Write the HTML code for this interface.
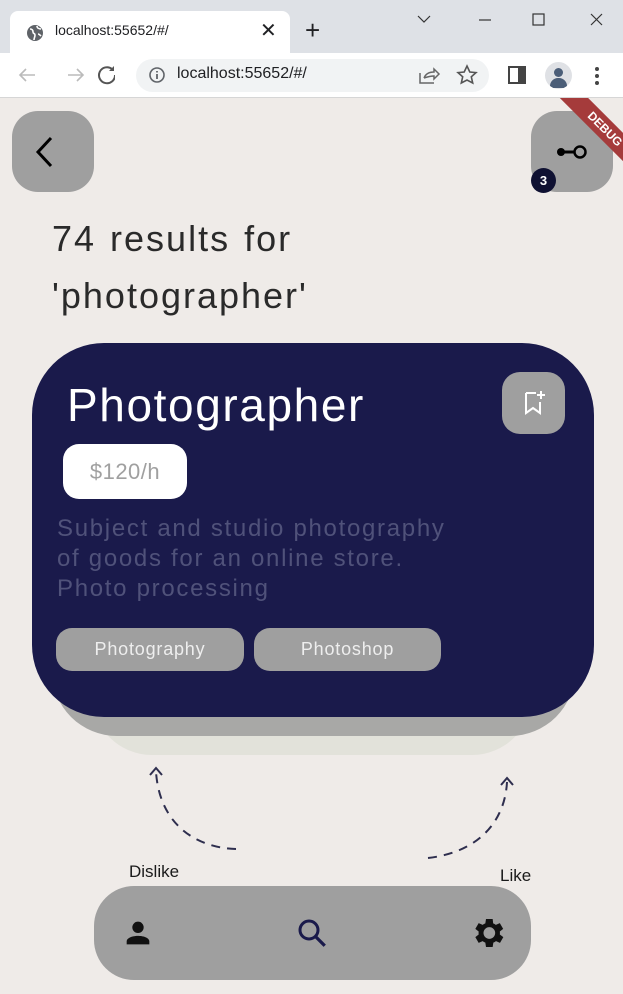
<!DOCTYPE html>
<html><head><meta charset="utf-8"><style>
*{margin:0;padding:0;box-sizing:border-box}
body{width:623px;height:994px;overflow:hidden;background:#efebe8;font-family:"Liberation Sans",sans-serif;position:relative}
.abs{position:absolute}
</style></head><body>
<div class="abs" style="left:0;top:0;width:623px;height:53px;background:#dee1e6"></div>
<div class="abs" style="left:10px;top:11px;width:280px;height:42px;background:#fff;border-radius:8px 8px 0 0"></div>
<svg class="abs" style="left:25px;top:23px" width="20" height="20" viewBox="0 0 20 20"><circle cx="10" cy="10" r="8" fill="#5f6368"/><path d="M5 6c2 0 3 1 3 3s2 1 2 3-1 3-1 5M12 3c0 2 2 3 4 3M13 11c1 0 2 1 3 2" stroke="#fff" stroke-width="1.6" fill="none"/></svg>
<div class="abs" style="left:55px;top:22px;font-size:14px;color:#202124">localhost:55652/#/</div>
<div class="abs" style="left:260px;top:18px;font-size:20px;color:#202124">✕</div>
<div class="abs" style="left:305px;top:15px;font-size:26px;color:#202124">+</div>
<svg class="abs" style="left:415px;top:12px" width="200" height="16" viewBox="0 0 200 16"><path d="M3 4l6 6 6-6" stroke="#333" fill="none" stroke-width="1.2"/><path d="M64 8h12" stroke="#333" stroke-width="1.2"/><rect x="118" y="2" width="11" height="11" stroke="#333" fill="none" stroke-width="1.2"/><path d="M176 2l11 11M187 2l-11 11" stroke="#333" stroke-width="1.2"/></svg>
<div class="abs" style="left:0;top:53px;width:623px;height:45px;background:#fff;border-bottom:1px solid #d6d6d6"></div>
<svg class="abs" style="left:15px;top:63px" width="100" height="24" viewBox="0 0 100 24"><path d="M20 12H5M11 6l-6 6 6 6" stroke="#bbb" stroke-width="1.6" fill="none"/><path d="M53 12h15M62 6l6 6-6 6" stroke="#bbb" stroke-width="1.6" fill="none"/><path d="M100 12a8 8 0 1 1-3-6" stroke="#555" stroke-width="2" fill="none"/><path d="M99 3v5h-5" fill="#555"/></svg>
<div class="abs" style="left:136px;top:59px;width:353px;height:33px;background:#f1f3f4;border-radius:17px"></div>
<svg class="abs" style="left:148px;top:66px" width="18" height="18" viewBox="0 0 18 18"><circle cx="9" cy="9" r="7" stroke="#5f6368" stroke-width="1.6" fill="none"/><path d="M9 8v5M9 5v1.5" stroke="#5f6368" stroke-width="1.8"/></svg>
<div class="abs" style="left:177px;top:65px;font-size:16px;color:#202124">localhost:55652/#/</div>
<svg class="abs" style="left:417px;top:64px" width="62" height="22" viewBox="0 0 62 22"><path d="M3 9v10h14M7 14c2-5 6-6 10-6V5l5 5-5 5v-3c-4 0-7 1-10 2" stroke="#666" fill="none" stroke-width="1.5"/><path d="M50 2l2.8 6 6.2.6-4.7 4.2 1.4 6.2L50 16l-5.7 3 1.4-6.2L41 8.6l6.2-.6z" stroke="#555" fill="none" stroke-width="1.6"/></svg>
<svg class="abs" style="left:508px;top:66px" width="18" height="18"><rect x="1" y="1" width="16" height="16" fill="none" stroke="#444" stroke-width="2"/><rect x="10" y="1" width="7" height="16" fill="#444"/></svg>
<div class="abs" style="left:545px;top:62px;width:27px;height:27px;border-radius:50%;background:#dfe1e5;overflow:hidden"><div class="abs" style="left:9px;top:6px;width:9px;height:9px;border-radius:50%;background:#4b5e78"></div><div class="abs" style="left:5px;top:16px;width:17px;height:10px;border-radius:8px 8px 0 0;background:#4b5e78"></div></div>
<svg class="abs" style="left:594px;top:66px" width="6" height="20"><circle cx="3" cy="3" r="2" fill="#444"/><circle cx="3" cy="10" r="2" fill="#444"/><circle cx="3" cy="17" r="2" fill="#444"/></svg>

<div class="abs" style="left:12px;top:111px;width:82px;height:81px;border-radius:26px;background:#9f9f9f"></div>
<svg class="abs" style="left:30px;top:135px" width="30" height="34"><path d="M21 3L8 17l13 14" stroke="#000" stroke-width="3" fill="none"/></svg>
<div class="abs" style="left:531px;top:111px;width:82px;height:81px;border-radius:26px;background:#9f9f9f"></div>
<svg class="abs" style="left:555px;top:142px" width="34" height="20"><circle cx="6" cy="10" r="4" fill="#000"/><path d="M6 10h14" stroke="#000" stroke-width="3"/><circle cx="25" cy="10" r="5.5" stroke="#000" stroke-width="2.5" fill="none"/></svg>
<div class="abs" style="left:531px;top:168px;width:25px;height:25px;border-radius:50%;background:#0f1132;color:#fff;font-size:13px;font-weight:bold;text-align:center;line-height:25px">3</div>
<div class="abs" style="overflow:hidden;left:520px;top:98px;width:103px;height:110px">
<div class="abs" style="left:15px;top:21px;width:140px;height:20px;background:#a53b3b;color:#fff;font-size:12px;font-weight:bold;text-align:center;line-height:20px;transform:rotate(45deg);transform-origin:center">DEBUG</div></div>

<div class="abs" style="left:52px;top:210px;font-size:36px;line-height:57px;color:#2a2a2a;letter-spacing:2px;word-spacing:2px;">74 results for<br>'photographer'</div>

<div class="abs" style="left:92px;top:560px;width:440px;height:195px;border-radius:0 0 60px 60px;background:#e2e2da"></div>
<div class="abs" style="left:52px;top:500px;width:523px;height:236px;border-radius:0 0 65px 65px;background:#a8a8a6"></div>
<div class="abs" style="left:32px;top:343px;width:562px;height:374px;border-radius:72px;background:#1a1a4b"></div>
<div class="abs" style="left:67px;top:378px;font-size:46px;color:#fff;letter-spacing:1.6px">Photographer</div>
<div class="abs" style="left:502px;top:372px;width:63px;height:62px;border-radius:18px;background:#9f9f9f"></div>
<svg class="abs" style="left:522px;top:390px" width="24" height="26"><path d="M4 3h10M4 3v20l7-5 7 5V12" stroke="#fff" stroke-width="2" fill="none"/><path d="M19 1v8M15 5h8" stroke="#fff" stroke-width="2"/></svg>
<div class="abs" style="left:63px;top:444px;width:124px;height:55px;border-radius:16px;background:#fff;color:#a0a0a0;font-size:22px;text-align:center;line-height:55px;letter-spacing:0.5px">$120/h</div>
<div class="abs" style="left:57px;top:514px;font-size:24px;line-height:30px;color:#50527a;letter-spacing:1.7px">Subject and studio photography<br>of goods for an online store.<br>Photo processing</div>
<div class="abs" style="left:56px;top:628px;width:188px;height:43px;border-radius:16px;background:#9f9f9f;color:#eee;font-size:18px;text-align:center;line-height:43px;letter-spacing:0.8px">Photography</div>
<div class="abs" style="left:254px;top:628px;width:187px;height:43px;border-radius:16px;background:#9f9f9f;color:#eee;font-size:18px;text-align:center;line-height:43px;letter-spacing:0.8px">Photoshop</div>

<svg class="abs" style="left:140px;top:760px" width="390" height="110"><path d="M96 89C60 88 20 68 16 12" stroke="#2e2e4e" stroke-width="2" fill="none" stroke-dasharray="9 7"/><path d="M10 15l6-7 6 7" stroke="#2e2e4e" stroke-width="2" fill="none"/><path d="M288 98C340 92 365 60 367 22" stroke="#2e2e4e" stroke-width="2" fill="none" stroke-dasharray="9 7"/><path d="M361 25l6-7 6 7" stroke="#2e2e4e" stroke-width="2" fill="none"/></svg>
<div class="abs" style="left:129px;top:862px;font-size:17px;color:#1a1a1a">Dislike</div>
<div class="abs" style="left:500px;top:866px;font-size:17px;color:#1a1a1a">Like</div>

<div class="abs" style="left:94px;top:886px;width:437px;height:94px;border-radius:40px;background:#9f9f9f"></div>
<svg class="abs" style="left:121px;top:916px" width="34" height="34" viewBox="0 0 24 24"><circle cx="12" cy="8" r="4" fill="#111"/><path d="M4 20v-2c0-3 5-4 8-4s8 1 8 4v2z" fill="#111"/></svg>
<svg class="abs" style="left:294px;top:915px" width="36" height="36" viewBox="0 0 24 24"><circle cx="10" cy="10" r="6" stroke="#1a1a4b" stroke-width="2" fill="none"/><path d="M14.5 14.5l6 6" stroke="#1a1a4b" stroke-width="2.2"/></svg>
<svg class="abs" style="left:468px;top:913px" width="40" height="40" viewBox="0 0 24 24"><path fill="#111" d="M19.1 12.9a7 7 0 000-1.8l2-1.6-2-3.4-2.4 1a7 7 0 00-1.6-.9L14.8 3.6h-4l-.4 2.6a7 7 0 00-1.6.9l-2.4-1-2 3.4 2 1.6a7 7 0 000 1.8l-2 1.6 2 3.4 2.4-1a7 7 0 001.6.9l.4 2.6h4l.4-2.6a7 7 0 001.6-.9l2.4 1 2-3.4zM12.8 15.5a3.5 3.5 0 110-7 3.5 3.5 0 010 7z"/></svg>
</body></html>
